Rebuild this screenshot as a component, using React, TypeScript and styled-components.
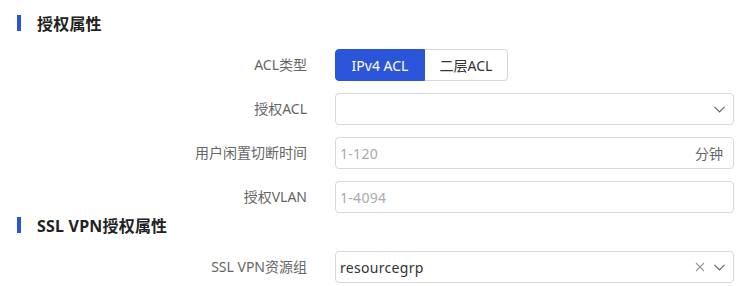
import React from 'react';
import styled, { createGlobalStyle } from 'styled-components';

const GlobalStyle = createGlobalStyle`
  body {
    margin: 0;
    background: #fff;
    font-family: "Noto Sans", "Noto Sans CJK SC", sans-serif;
  }
`;

const Page = styled.div`
  width: 746px;
  padding-top: 12px;
  box-sizing: border-box;
`;

const SectionTitle = styled.div`
  display: flex;
  align-items: center;
  height: 22px;
  margin: 0 0 15px 17px;
  font-size: 16px;
  font-weight: 700;
  color: #222;
  letter-spacing: 0.2px;
  &::before {
    content: '';
    width: 4px;
    height: 16px;
    background: #2b55d9;
    margin-right: 16px;
  }
`;

const Form = styled.div`
  display: grid;
  grid-template-columns: 307px 399px;
  column-gap: 28px;
  row-gap: 12px;
  margin-bottom: 1px;
`;

const Label = styled.div`
  height: 32px;
  line-height: 32px;
  text-align: right;
  font-size: 14px;
  color: #666;
`;

const Segmented = styled.div`
  display: flex;
  height: 32px;
`;

const Segment = styled.div<{ $active?: boolean }>`
  display: flex;
  align-items: center;
  justify-content: center;
  box-sizing: border-box;
  font-size: 14px;
  color: ${(p) => (p.$active ? '#fff' : '#333')};
  background: ${(p) => (p.$active ? '#2b55d9' : '#fff')};
  border: 1px solid ${(p) => (p.$active ? '#2b55d9' : '#d9d9d9')};
  &:first-child {
    width: 90px;
    border-radius: 4px 0 0 4px;
  }
  &:last-child {
    width: 83px;
    border-left: none;
    border-radius: 0 4px 4px 0;
  }
`;

const Field = styled.div`
  display: flex;
  align-items: center;
  box-sizing: border-box;
  height: 32px;
  padding: 0 8px 0 4px;
  border: 1px solid #d9d9d9;
  border-radius: 4px;
  font-size: 14px;
  color: #333;
`;

const Value = styled.span<{ $placeholder?: boolean }>`
  flex: 1;
  letter-spacing: 0.3px;
  color: ${(p) => (p.$placeholder ? '#aaa' : '#333')};
`;

const Suffix = styled.span`
  font-size: 14px;
  color: #666;
  padding-right: 2px;
`;

const Icons = styled.span`
  display: flex;
  align-items: center;
  gap: 9px;
`;

const Chevron = () => (
  <svg width="11" height="7" viewBox="0 0 11 7">
    <path d="M0.5 0.8 L5.5 5.8 L10.5 0.8" fill="none" stroke="#666" strokeWidth="1.2" />
  </svg>
);

const Clear = () => (
  <svg width="10" height="10" viewBox="0 0 10 10">
    <path d="M1 1 L9 9 M9 1 L1 9" fill="none" stroke="#999" strokeWidth="1.1" />
  </svg>
);

export default function App() {
  return (
    <Page>
      <GlobalStyle />
      <SectionTitle>授权属性</SectionTitle>
      <Form>
        <Label>ACL类型</Label>
        <Segmented>
          <Segment $active>IPv4 ACL</Segment>
          <Segment>二层ACL</Segment>
        </Segmented>

        <Label>授权ACL</Label>
        <Field>
          <Value />
          <Icons>
            <Chevron />
          </Icons>
        </Field>

        <Label>用户闲置切断时间</Label>
        <Field>
          <Value $placeholder>1-120</Value>
          <Suffix>分钟</Suffix>
        </Field>

        <Label>授权VLAN</Label>
        <Field>
          <Value $placeholder>1-4094</Value>
        </Field>
      </Form>

      <SectionTitle>SSL VPN授权属性</SectionTitle>
      <Form>
        <Label>SSL VPN资源组</Label>
        <Field>
          <Value>resourcegrp</Value>
          <Icons>
            <Clear />
            <Chevron />
          </Icons>
        </Field>
      </Form>
    </Page>
  );
}
